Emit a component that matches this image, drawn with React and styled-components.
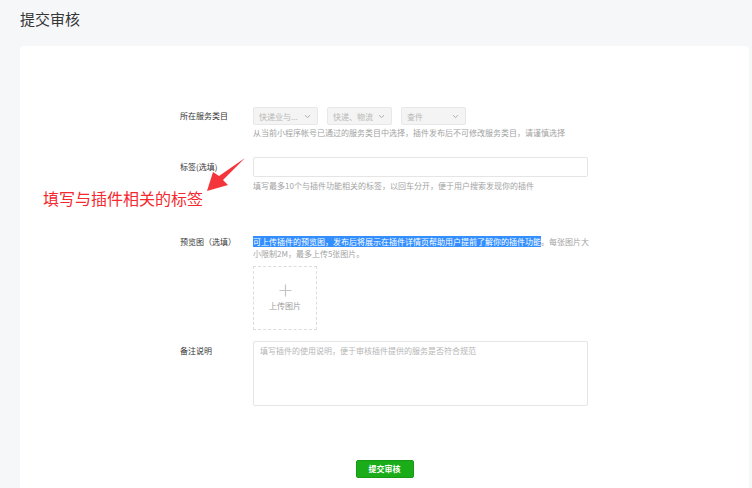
import React from "react";
import styled, { createGlobalStyle } from "styled-components";

const Global = createGlobalStyle`
  html, body { margin: 0; padding: 0; background: #f6f7f9; }
  body { font-family: "Noto Sans CJK SC", "Noto Sans", sans-serif; overflow: hidden; }
  * { box-sizing: border-box; }
`;

const Page = styled.div`
  width: 752px;
  height: 488px;
  position: relative;
  padding: 8px 3px 0 20px;
  display: flex;
  flex-direction: column;
`;

const Title = styled.h1`
  margin: 0;
  font-size: 15px;
  font-weight: 400;
  line-height: 22px;
  color: #353535;
  height: 38px;
`;

const Card = styled.div`
  flex: 1;
  background: #fff;
  border-radius: 4px 4px 0 0;
  padding: 61px 0 0 160px;
  display: flex;
  flex-direction: column;
`;

const Row = styled.div`
  display: flex;
  margin-top: ${(p) => p.$mt || 0}px;
`;

const Label = styled.div`
  width: 73px;
  flex: none;
  font-size: 8px;
  color: #353535;
  line-height: ${(p) => p.$lh}px;
  white-space: nowrap;
`;

const Control = styled.div`
  width: 335px;
  display: flex;
  flex-direction: column;
`;

const Selects = styled.div`
  display: flex;
  gap: 9px;
`;

const Select = styled.div`
  width: 65px;
  height: 18px;
  background: #f4f4f4;
  border: 1px solid #e8e8e8;
  border-radius: 2px;
  display: flex;
  align-items: center;
  justify-content: space-between;
  padding: 0 6px 0 5px;
  font-size: 8px;
  color: #b8b8b8;
`;

const Hint = styled.div`
  font-size: 8px;
  line-height: 12px;
  color: #a3a3a3;
  margin-top: ${(p) => p.$mt || 0}px;
  white-space: ${(p) => (p.$nowrap ? "nowrap" : "normal")};
`;

const Input = styled.div`
  height: 20px;
  border: 1px solid #e5e5e5;
  border-radius: 2px;
  background: #fff;
`;

const Desc = styled.div`
  font-size: 8px;
  line-height: 12px;
  color: #a3a3a3;
  width: 340px;
`;

const Selected = styled.span`
  background: #338fff;
  color: #fff;
`;

const Upload = styled.div`
  width: 64px;
  height: 64px;
  margin-top: 6px;
  border: 1px dashed #dcdcdc;
  display: flex;
  flex-direction: column;
  align-items: center;
  padding-top: 17px;
  gap: 3px;
`;

const UploadText = styled.div`
  font-size: 8px;
  line-height: 12px;
  color: #9a9a9a;
`;

const TextArea = styled.div`
  height: 65px;
  border: 1px solid #e5e5e5;
  border-radius: 2px;
  padding: 3px 6px;
  font-size: 8px;
  line-height: 12px;
  color: #b5b5b5;
`;

const ButtonBar = styled.div`
  display: flex;
  justify-content: center;
  margin: 54px 0 0 -160px;
`;

const Button = styled.button`
  width: 58px;
  height: 18px;
  border: 1px solid #179b16;
  background: #1aad19;
  border-radius: 2px;
  color: #fff;
  font-family: inherit;
  font-size: 8px;
  font-weight: 700;
  padding: 0;
  line-height: 16px;
`;

const Note = styled.div`
  position: absolute;
  left: 43px;
  top: 187px;
  font-size: 16px;
  line-height: 22px;
  color: #f5282f;
  white-space: nowrap;
`;

const Arrow = styled.svg`
  position: absolute;
  left: 200px;
  top: 154px;
`;

const Chevron = () => (
  <svg width="7" height="5" viewBox="0 0 7 5">
    <path d="M1 1.2 L3.5 3.6 L6 1.2" fill="none" stroke="#a8a8a8" strokeWidth="0.9" />
  </svg>
);

export default function App() {
  return (
    <>
      <Global />
      <Page>
        <Title>提交审核</Title>
        <Card>
          <Row>
            <Label $lh={18}>所在服务类目</Label>
            <Control>
              <Selects>
                <Select>
                  <span>快递业与...</span>
                  <Chevron />
                </Select>
                <Select>
                  <span>快递、物流</span>
                  <Chevron />
                </Select>
                <Select>
                  <span>查件</span>
                  <Chevron />
                </Select>
              </Selects>
              <Hint $mt={2} $nowrap>
                从当前小程序帐号已通过的服务类目中选择，插件发布后不可修改服务类目，请谨慎选择
              </Hint>
            </Control>
          </Row>
          <Row $mt={18}>
            <Label $lh={20}>标签(选填)</Label>
            <Control>
              <Input />
              <Hint $mt={3} $nowrap>
                填写最多10个与插件功能相关的标签，以回车分开，便于用户搜索发现你的插件
              </Hint>
            </Control>
          </Row>
          <Row $mt={44}>
            <Label $lh={12}>预览图（选填）</Label>
            <Control>
              <Desc>
                <Selected>可上传插件的预览图，发布后将展示在插件详情页帮助用户提前了解你的插件功能</Selected>
                。每张图片大小限制2M，最多上传5张图片。
              </Desc>
              <Upload>
                <svg width="13" height="13" viewBox="0 0 13 13">
                  <path d="M6.5 0.5 V12.5 M0.5 6.5 H12.5" stroke="#c4c4c4" strokeWidth="1.2" />
                </svg>
                <UploadText>上传图片</UploadText>
              </Upload>
            </Control>
          </Row>
          <Row $mt={11}>
            <Label $lh={20}>备注说明</Label>
            <Control>
              <TextArea>填写插件的使用说明，便于审核插件提供的服务是否符合规范</TextArea>
            </Control>
          </Row>
          <ButtonBar>
            <Button>提交审核</Button>
          </ButtonBar>
        </Card>
        <Note>填写与插件相关的标签</Note>
        <Arrow width="50" height="42" viewBox="200 154 50 42">
          <polygon
            points="245,158 219,176 213,172 207,191 228,185 223,180"
            fill="#f4353b"
          />
        </Arrow>
      </Page>
    </>
  );
}
